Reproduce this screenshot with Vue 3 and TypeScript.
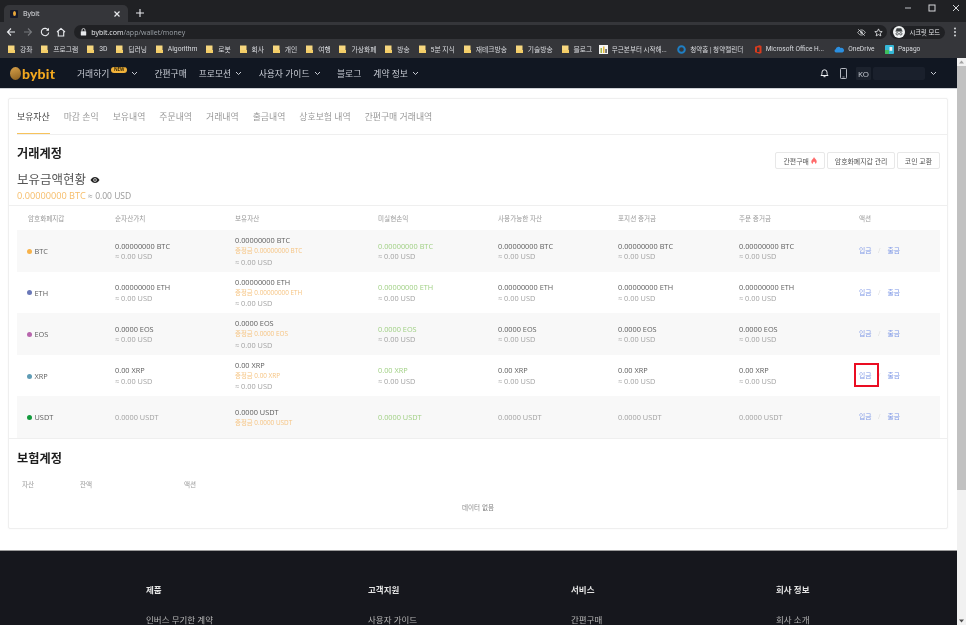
<script setup lang="ts">
interface Bookmark { label: string; kind: string }
interface Coin { sym: string; color: string; amt: string; usd: boolean; dim: boolean }

const bookmarks: Bookmark[] = [
  { label: '강좌', kind: 'folder' }, { label: '프로그램', kind: 'folder' }, { label: '3D', kind: 'folder' },
  { label: '딥러닝', kind: 'folder' }, { label: 'Algorithm', kind: 'folder' }, { label: '로봇', kind: 'folder' },
  { label: '회사', kind: 'folder' }, { label: '개인', kind: 'folder' }, { label: '여행', kind: 'folder' },
  { label: '가상화폐', kind: 'folder' }, { label: '방송', kind: 'folder' }, { label: '5분 지식', kind: 'folder' },
  { label: '재테크방송', kind: 'folder' }, { label: '기술방송', kind: 'folder' }, { label: '블로그', kind: 'folder' },
  { label: '무근본부터 시작해...', kind: 'doc' }, { label: '청약홈 | 청약캘린더', kind: 'ring' },
  { label: 'Microsoft Office H...', kind: 'office' }, { label: 'OneDrive', kind: 'cloud' }, { label: 'Papago', kind: 'papago' },
]
const tabs = ['보유자산', '마감 손익', '보유내역', '주문내역', '거래내역', '출금내역', '상호보험 내역', '간편구매 거래내역']
const headers = ['암호화폐지갑', '순자산가치', '보유자산', '미실현손익', '사용가능한 자산', '포지션 증거금', '주문 증거금', '액션']
const coins: Coin[] = [
  { sym: 'BTC', color: '#f7b24a', amt: '0.00000000', usd: true, dim: false },
  { sym: 'ETH', color: '#6a78b8', amt: '0.00000000', usd: true, dim: false },
  { sym: 'EOS', color: '#b866ad', amt: '0.0000', usd: true, dim: false },
  { sym: 'XRP', color: '#5f9cb5', amt: '0.00', usd: true, dim: false },
  { sym: 'USDT', color: '#139a3c', amt: '0.0000', usd: false, dim: true },
]
const footer = [
  { title: '제품', link: '인버스 무기한 계약' },
  { title: '고객지원', link: '사용자 가이드' },
  { title: '서비스', link: '간편구매' },
  { title: '회사 정보', link: '회사 소개' },
]
</script>

<template>
  <div class="browser">
    <div class="tabstrip">
      <div class="tab">
        <span class="favicon"><i></i></span>
        <span class="tab-title">Bybit</span>
        <svg class="tab-x" width="8" height="8" viewBox="0 0 8 8"><path d="M1.5 1.5l5 5M6.5 1.5l-5 5" stroke="#e8eaed" stroke-width="1.2"/></svg>
      </div>
      <svg class="newtab" width="10" height="10" viewBox="0 0 10 10"><path d="M5 1v8M1 5h8" stroke="#e8eaed" stroke-width="1.1"/></svg>
      <div class="winctl">
        <svg width="8" height="8" viewBox="0 0 8 8"><path d="M1 4h6" stroke="#bdc1c6" stroke-width="1"/></svg>
        <svg width="8" height="8" viewBox="0 0 8 8"><rect x="1" y="1" width="6" height="6" fill="none" stroke="#d5d7da" stroke-width="1"/></svg>
        <svg width="8" height="8" viewBox="0 0 8 8"><path d="M1 1l6 6M7 1l-6 6" stroke="#d5d7da" stroke-width="1"/></svg>
      </div>
    </div>

    <div class="toolbar">
      <svg class="tb" width="10" height="10" viewBox="0 0 10 10"><path d="M9 5H2M5 1.500L1.500 5 5 8.500" fill="none" stroke="#e8eaed" stroke-width="1.1"/></svg>
      <svg class="tb" width="10" height="10" viewBox="0 0 10 10"><path d="M1 5h7M5 1.500L8.500 5 5 8.500" fill="none" stroke="#76787c" stroke-width="1.1"/></svg>
      <svg class="tb" width="10" height="10" viewBox="0 0 10 10"><path d="M8.300 3.300A3.700 3.700 0 1 0 8.700 5.500" fill="none" stroke="#e8eaed" stroke-width="1.100"/><path d="M9 .8v3H6z" fill="#e8eaed"/></svg>
      <svg class="tb" width="10" height="10" viewBox="0 0 10 10"><path d="M1 5l4-3.600L9 5M2.300 4.500V9h5.400V4.500" fill="none" stroke="#e8eaed" stroke-width="1.100"/></svg>
      <div class="omnibox">
        <svg width="7" height="8" viewBox="0 0 7 8"><rect x=".8" y="3.200" width="5.400" height="4.300" rx=".6" fill="#e8eaed"/><path d="M2 3.300V2a1.500 1.500 0 0 1 3 0v1.300" fill="none" stroke="#e8eaed" stroke-width=".8"/></svg>
        <span class="url"><b>bybit.com</b>/app/wallet/money</span>
        <span class="spacer"></span>
        <svg width="9" height="9" viewBox="0 0 10 10"><path d="M.8 5C2 3 3.400 2.200 5 2.200S8 3 9.200 5C8 7 6.600 7.800 5 7.800S2 7 .8 5z" fill="none" stroke="#d5d7da" stroke-width=".9"/><circle cx="5" cy="5" r="1.300" fill="#d5d7da"/><path d="M1.500 1.500l7 7" stroke="#d5d7da" stroke-width="1"/></svg>
        <svg class="star" width="9" height="9" viewBox="0 0 10 10"><path d="M5 1l1.200 2.700 2.900.3-2.200 1.900.7 2.900L5 7.300 2.400 8.800l.7-2.900L.9 4l2.900-.3z" fill="none" stroke="#e8eaed" stroke-width=".9"/></svg>
      </div>
      <div class="incog">
        <span class="incog-ic"><svg width="12" height="12" viewBox="0 0 12 12"><circle cx="6" cy="6" r="6" fill="#f1f3f4"/><path d="M3 5l.8-2.400h4.400L9 5zM2.300 5.400h7.400" fill="#3c4043" stroke="#3c4043" stroke-width=".5"/><circle cx="4.200" cy="7.800" r="1.200" fill="none" stroke="#3c4043" stroke-width=".8"/><circle cx="7.800" cy="7.800" r="1.200" fill="none" stroke="#3c4043" stroke-width=".8"/></svg></span>
        <span>시크릿 모드</span>
      </div>
      <svg class="kebab" width="4" height="10" viewBox="0 0 4 10"><circle cx="2" cy="1.500" r=".9" fill="#e8eaed"/><circle cx="2" cy="5" r=".9" fill="#e8eaed"/><circle cx="2" cy="8.500" r=".9" fill="#e8eaed"/></svg>
    </div>

    <div class="bookmarks">
      <div v-for="b in bookmarks" :key="b.label" class="bm">
        <svg v-if="b.kind === 'folder'" width="7" height="8" viewBox="0 0 7 8"><path d="M0 .5h6.500v7.500H0z" fill="#f6d77f"/><path d="M0 5h7v3H0z" fill="#f3cd67"/></svg>
        <svg v-else-if="b.kind === 'doc'" width="9" height="9" viewBox="0 0 9 9"><rect width="9" height="9" fill="#f5f5f5"/><rect x="1.500" y="3" width="1.500" height="5" fill="#9fb84a"/><rect x="4" y="1.500" width="1.500" height="6.500" fill="#e8b93c"/><rect x="6.300" y="4" width="1.500" height="4" fill="#555"/></svg>
        <svg v-else-if="b.kind === 'ring'" width="9" height="9" viewBox="0 0 9 9"><circle cx="4.500" cy="4.500" r="3.300" fill="none" stroke="#1f7fc4" stroke-width="2"/></svg>
        <svg v-else-if="b.kind === 'office'" width="8" height="9" viewBox="0 0 8 9"><path d="M1 1.800L5.500.300 7.500 1v7l-2 .8L1 7.300z" fill="#d83b1e"/><path d="M3 2.500h2.500v4.500H3z" fill="#35363a"/></svg>
        <svg v-else-if="b.kind === 'cloud'" width="10" height="7" viewBox="0 0 10 7"><path d="M2 6.500a1.700 1.700 0 0 1-.3-3.300A2.700 2.700 0 0 1 6.600 2 2.200 2.200 0 0 1 8.400 6.500z" fill="#2b8fe0"/></svg>
        <svg v-else width="9" height="9" viewBox="0 0 9 9"><rect width="9" height="9" rx="1" fill="#35b8d8"/><path d="M0 5h4v4H1a1 1 0 0 1-1-1z" fill="#3fbf5f"/><path d="M4.500 2h2.800v3.800H4.500z" fill="#f2f2f2"/></svg>
        <span>{{ b.label }}</span>
      </div>
    </div>

    <div class="viewport">
      <div class="page">
        <header class="sitenav">
          <div class="logo">
            <span class="coin"></span>
            <span class="logotext">bybit</span>
          </div>
          <nav class="menu">
            <span class="mi">거래하기<em class="new">NEW</em><svg class="chev" width="7" height="5" viewBox="0 0 7 5"><path d="M1 1l2.500 2.500L6 1" fill="none" stroke="#c8ccd4" stroke-width="1"/></svg></span>
            <span class="mi">간편구매</span>
            <span class="mi">프로모션<svg class="chev" width="7" height="5" viewBox="0 0 7 5"><path d="M1 1l2.500 2.500L6 1" fill="none" stroke="#c8ccd4" stroke-width="1"/></svg></span>
            <span class="mi">사용자 가이드<svg class="chev" width="7" height="5" viewBox="0 0 7 5"><path d="M1 1l2.500 2.500L6 1" fill="none" stroke="#c8ccd4" stroke-width="1"/></svg></span>
            <span class="mi">블로그</span>
            <span class="mi">계약 정보<svg class="chev" width="7" height="5" viewBox="0 0 7 5"><path d="M1 1l2.500 2.500L6 1" fill="none" stroke="#c8ccd4" stroke-width="1"/></svg></span>
          </nav>
          <div class="navright">
            <svg width="9" height="10" viewBox="0 0 9 10"><path d="M1 7.500c.8-.8 1-1.500 1-3.200a2.500 2.500 0 0 1 5 0c0 1.700.2 2.400 1 3.200z" fill="none" stroke="#eef0f3" stroke-width="1"/><path d="M3.500 8.700h2" stroke="#eef0f3" stroke-width="1"/></svg>
            <svg width="7" height="11" viewBox="0 0 7 11"><rect x=".5" y=".5" width="6" height="10" rx=".8" fill="none" stroke="#c8ccd4" stroke-width=".9"/><path d="M2.500 9h2" stroke="#c8ccd4" stroke-width=".7"/></svg>
            <span class="ko">KO</span>
            <span class="redact"></span>
            <svg width="7" height="5" viewBox="0 0 7 5"><path d="M1 1l2.500 2.500L6 1" fill="none" stroke="#c8ccd4" stroke-width="1"/></svg>
          </div>
        </header>

        <main class="content">
          <section class="card">
            <div class="tabs">
              <span v-for="(t, i) in tabs" :key="t" class="tabitem" :class="{ active: i === 0 }">{{ t }}</span>
            </div>

            <div class="headline">
              <div>
                <h2 class="h">거래계정</h2>
                <div class="balance-title">보유금액현황
                  <svg width="10" height="8" viewBox="0 0 10 8"><path d="M.5 4C1.700 1.900 3.200 1 5 1s3.300.9 4.500 3C8.300 6.100 6.800 7 5 7S1.700 6.100.5 4z" fill="#222"/><circle cx="5" cy="4" r="1.700" fill="#fff"/><circle cx="5" cy="4" r=".9" fill="#222"/></svg>
                </div>
                <div class="balance"><span class="or">0.00000000 BTC</span> ≈ 0.00 USD</div>
              </div>
              <div class="btns">
                <button class="btn">간편구매 <svg width="6" height="7" viewBox="0 0 6 7"><path d="M3 0c.3 1.300 2.700 2.300 2.700 4.500 0 1.500-1 2.500-1.400 2.500.4-1-.4-2-1.300-2.600C2.200 5 1.600 6 1.700 7 .9 6.700.3 5.700.3 4.500.3 2.700 2.600 1.700 3 0z" fill="#ff6b6b"/></svg></button>
                <button class="btn">암호화폐지갑 관리</button>
                <button class="btn">코인 교환</button>
              </div>
            </div>

            <div class="table">
              <div class="thead grid">
                <span v-for="h in headers" :key="h">{{ h }}</span>
              </div>
              <div v-for="c in coins" :key="c.sym" class="row grid">
                <div class="symcell"><i class="dot" :style="{ background: c.color }"></i>{{ c.sym }}</div>
                <div class="cell">
                  <div :class="c.dim ? 'gray' : 'dark'">{{ c.amt }} {{ c.sym }}</div>
                  <div v-if="c.usd" class="gray">≈ 0.00 USD</div>
                </div>
                <div class="cell">
                  <div class="dark">{{ c.amt }} {{ c.sym }}</div>
                  <div class="margin">증정금 {{ c.amt }} {{ c.sym }}</div>
                  <div v-if="c.usd" class="gray">≈ 0.00 USD</div>
                </div>
                <div class="cell">
                  <div class="green">{{ c.amt }} {{ c.sym }}</div>
                  <div v-if="c.usd" class="gray">≈ 0.00 USD</div>
                </div>
                <div v-for="n in 3" :key="n" class="cell">
                  <div :class="c.dim ? 'gray' : 'dark'">{{ c.amt }} {{ c.sym }}</div>
                  <div v-if="c.usd" class="gray">≈ 0.00 USD</div>
                </div>
                <div class="actions">
                  <span class="link deposit">입금<i v-if="c.sym === 'XRP'" class="redbox"></i></span>
                  <span class="slash">/</span>
                  <span class="link">출금</span>
                </div>
              </div>
            </div>

            <div class="insurance">
              <h2 class="h">보험계정</h2>
              <div class="ins-head">
                <span class="c1">자산</span><span class="c2">잔액</span><span>액션</span>
              </div>
              <div class="empty">데이터 없음</div>
            </div>
          </section>
        </main>

        <footer class="foot">
          <div v-for="f in footer" :key="f.title" class="fcol">
            <div class="ftitle">{{ f.title }}</div>
            <div class="flink">{{ f.link }}</div>
          </div>
        </footer>
      </div>

      <div class="scrollbar">
        <svg width="9" height="8" viewBox="0 0 9 8"><path d="M4.500 2.500L7 5.500H2z" fill="#a3a3a3"/></svg>
        <div class="thumb"></div>
        <div class="track"></div>
        <svg width="9" height="8" viewBox="0 0 9 8"><path d="M4.500 5.500L7 2.500H2z" fill="#505050"/></svg>
      </div>
    </div>
  </div>
</template>

<style>
html, body { margin: 0; background: #fff; overflow: hidden; }
</style>

<style scoped>
.browser {
  width: 966px; height: 625px; overflow: hidden; display: flex; flex-direction: column;
  font-family: "Open Sans", "Noto Sans CJK KR", sans-serif; color: #333; background: #fff;
  filter: blur(.3px);
}
.tabstrip { height: 22px; flex: none; background: #202124; display: flex; align-items: flex-end; position: relative; padding-left: 4px; }
.tab { width: 124px; height: 17px; background: #35363a; border-radius: 5px 5px 0 0; display: flex; align-items: center; box-sizing: border-box; padding: 0 7px 0 6px; color: #dfe1e5; font-size: 7px; }
.favicon { width: 8px; height: 8px; background: #16192a; display: flex; align-items: center; justify-content: center; margin-right: 5px; border-radius: 1px; }
.favicon i { width: 3px; height: 5px; border-radius: 50%; background: #e8a63a; }
.tab-title { flex: 1; }
.newtab { margin: 0 0 4px 7px; }
.winctl { margin-left: auto; display: flex; gap: 16px; align-self: flex-start; padding: 4px 6px 0 0; }

.toolbar { height: 20px; flex: none; background: #35363a; display: flex; align-items: center; padding: 0 4px 0 6px; }
.tb { margin-right: 6.800px; }
.omnibox { margin-left: 1px; flex: 1; height: 14px; background: #202124; border-radius: 7px; display: flex; align-items: center; padding: 0 4px 0 6px; }
.url { font-size: 7px; color: #9aa0a6; margin-left: 4px; }
.url b { font-weight: 400; color: #e8eaed; }
.spacer { flex: 1; }
.star { margin-left: 8px; }
.incog { margin-left: 3px; height: 13px; background: #202124; border-radius: 7px; display: flex; align-items: center; gap: 4px; color: #e8eaed; font-size: 6.300px; padding: 0 5px 0 3px; white-space: nowrap; }
.incog-ic { display: flex; }
.kebab { margin: 0 5px 0 8px; }

.bookmarks { height: 16px; flex: none; background: #35363a; display: flex; align-items: center; padding: 0 0 2px 8px; box-sizing: border-box; color: #dadce0; font-family: Roboto, "Noto Sans CJK KR", sans-serif; font-size: 6.800px; white-space: nowrap; }
.bm { display: flex; align-items: center; gap: 5px; margin-right: 8.800px; }
.bm:nth-child(15) { margin-right: 6.500px; }
.bm:nth-child(n+16) { font-size: 6.550px; gap: 4px; margin-right: 10.400px; }

.viewport { flex: 1; min-height: 0; display: flex; }
.page { flex: 1; min-width: 0; overflow: hidden; background: #fff; }
.sitenav { height: 30px; background: #111722; border-bottom: 1px solid #cfd2d6; display: flex; align-items: center; color: #c8ccd4; font-size: 8.800px; padding-left: 10px; white-space: nowrap; }
.logo { display: flex; align-items: center; width: 67px; flex: none; }
.coin { width: 11px; height: 13px; border-radius: 50%; background: linear-gradient(160deg, #d9a24a, #8a5f1f); margin-right: 1px; }
.logotext { font-family: Lato, sans-serif; font-weight: 900; font-size: 14px; color: #f2a81f; letter-spacing: .2px; }
.menu { display: flex; align-items: center; gap: 12px; }
.mi { display: flex; align-items: center; }
.new { font-style: normal; font-size: 4.500px; font-weight: 700; background: #f2b33a; color: #3a2a07; border-radius: 4px; padding: 0 2.500px; line-height: 5.500px; margin: -6px 0 0 2px; }
.chev { margin: 0 4.500px 0 4px; }
.navright { margin-left: auto; display: flex; align-items: center; padding-right: 20px; }
.navright > svg:nth-child(2) { margin-left: 11px; }
.ko { margin-left: 9px; background: #1c222d; font-size: 8px; padding: 1px 2px; border-radius: 1px; }
.redact { width: 52px; height: 13px; background: #1a202c; margin: 0 5px 0 2px; border-radius: 2px; }

.content { padding: 9px 9px 21px 8px; }
.card { border: 1px solid #efefef; border-radius: 2px; padding: 0 7.500px 0 8px; background: #fff; height: 431px; box-sizing: border-box; box-shadow: 0 0 2px rgba(0,0,0,.04); }
.tabs { height: 35px; display: flex; gap: 14px; border-bottom: 1px solid #efefef; margin: 0 -7.500px 0 0; align-items: center; font-size: 8.900px; color: #999; white-space: nowrap; position: relative; }
.tabitem { height: 35px; line-height: 35px; box-sizing: border-box; }
.active { color: #444; border-bottom: 1.500px solid #f7c35c; }
.headline { display: flex; justify-content: space-between; height: 70px; }
.h { margin: 0; font-size: 12.200px; font-weight: 700; color: #1d1d1d; line-height: 16px; }
.headline .h { padding-top: 11px; }
.balance-title { font-size: 12.500px; color: #555; line-height: 18px; margin-top: 9px; display: flex; align-items: center; gap: 4px; }
.balance { font-size: 8.500px; color: #999; line-height: 12px; margin-top: 1px; }
.or { color: #f6bd69; font-size: 9.200px; }
.btns { display: flex; gap: 2px; padding-top: 17px; align-items: flex-start; }
.btn { height: 17px; background: #fff; border: 1px solid #e8e8e8; border-radius: 2px; font: inherit; font-size: 6.900px; color: #555; padding: 0 7px; display: flex; align-items: center; gap: 2px; white-space: nowrap; }
.btn:last-child { padding: 0 6.500px; }
.table { border-top: 1px solid #efefef; margin: 0 -7.500px 0 -8px; padding: 0 7.500px 0 8px; }
.grid { display: grid; grid-template-columns: 98px 120px 143px 120px 120px 121px 120px 81px; }
.thead { height: 24px; box-sizing: border-box; padding-bottom: 1px; align-items: center; font-size: 6.600px; color: #999; }
.thead span:first-child { padding-left: 11px; }
.row { height: 41.600px; box-sizing: border-box; padding-top: 1px; align-items: center; font-size: 7.350px; line-height: 10.700px; white-space: nowrap; }
.row:nth-of-type(even) { background: #f8f8f8; }
.symcell { display: flex; align-items: center; gap: 2.500px; padding-left: 10px; color: #5c5c5c; }
.dot { width: 5px; height: 5px; border-radius: 50%; }
.dark { color: #5c5c5c; }
.gray { color: #a2a2a2; }
.green { color: #a0d084; }
.margin { color: #f6c482; font-size: 6.400px; }
.actions { display: flex; align-items: center; font-size: 6.800px; }
.link { color: #7f98e6; position: relative; }
.slash { color: #ddd; margin: 0 7px 0 6.500px; }
.redbox { position: absolute; left: -5.500px; top: -8px; width: 25px; height: 24px; box-sizing: border-box; border: 2px solid #ea0d22; }
.insurance { border-top: 1px solid #efefef; margin: 0 -7.500px 0 -8px; padding: 12px 0 0 8px; }
.ins-head { display: flex; font-size: 6.600px; color: #999; padding: 13px 0 0 5px; line-height: 10px; }
.c1 { width: 58px; } .c2 { width: 104px; }
.empty { text-align: center; font-size: 6.600px; color: #888; padding-top: 13px; margin-right: 8px; line-height: 10px; }

.foot { height: 75px; box-sizing: border-box; border-top: 1px solid #9b9b9b; background: #16171d; display: grid; grid-template-columns: 222px 203px 205px 1fr; padding: 33px 0 0 146px; }
.ftitle { color: #e4e4e4; font-size: 8.500px; font-weight: 700; line-height: 12px; }
.flink { color: #b5b5b5; font-size: 8.500px; line-height: 12px; margin-top: 18px; }

.scrollbar { width: 9px; flex: none; background: #f1f1f1; display: flex; flex-direction: column; }
.scrollbar svg { flex: none; }
.thumb { height: 424px; background: #c1c1c1; flex: none; }
.track { flex: 1; }
</style>
